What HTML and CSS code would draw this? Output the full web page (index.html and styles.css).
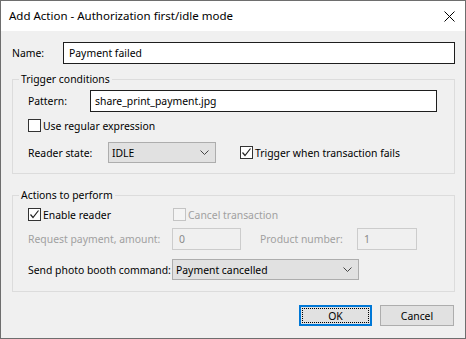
FILE: index.html
```html
<!DOCTYPE html>
<html>
<head>
<meta charset="utf-8">
<link rel="stylesheet" href="styles.css">
</head>
<body>
<div class="window">
  <div class="titlebar">
    <span class="title">Add Action - Authorization first/idle mode</span>
    <svg class="close" width="11" height="11" viewBox="0 0 11 11"><path d="M0.5 0.5L10.5 10.5M10.5 0.5L0.5 10.5" stroke="#000" stroke-width="1" fill="none"/></svg>
  </div>
  <div class="content">
    <div class="row name-row">
      <label class="lbl name-lbl">Name:</label>
      <div class="edit name-edit">Payment failed</div>
    </div>

    <fieldset class="group group1">
      <legend>Trigger conditions</legend>
      <div class="group-body">
        <div class="row pattern-row">
          <label class="lbl pattern-lbl">Pattern:</label>
          <div class="edit pattern-edit">share_print_payment.jpg</div>
        </div>
        <div class="row check-row regex-row">
          <span class="box"></span><span class="ctext">Use regular expression</span>
        </div>
        <div class="row state-row">
          <label class="lbl state-lbl">Reader state:</label>
          <div class="combo state-combo"><span>IDLE</span><svg class="chev" width="9" height="5" viewBox="0 0 9 5"><path d="M0.5 0.5L4.5 4.5L8.5 0.5" stroke="#444" fill="none"/></svg></div>
          <span class="box checked trig-box"><svg width="11" height="11" viewBox="0 0 11 11"><path d="M1.5 5.5L4 8.5L9.5 1.5" stroke="#222" stroke-width="1.2" fill="none"/></svg></span><span class="ctext">Trigger when transaction fails</span>
        </div>
      </div>
    </fieldset>

    <fieldset class="group group2">
      <legend>Actions to perform</legend>
      <div class="group-body">
        <div class="row check-row enable-row">
          <div class="enable-cell"><span class="box checked"><svg width="11" height="11" viewBox="0 0 11 11"><path d="M1.5 5.5L4 8.5L9.5 1.5" stroke="#222" stroke-width="1.2" fill="none"/></svg></span><span class="ctext">Enable reader</span></div>
          <span class="box disabled"></span><span class="ctext dis">Cancel transaction</span>
        </div>
        <div class="row req-row">
          <label class="lbl dis req-lbl">Request payment, amount:</label>
          <div class="edit disabled amount-edit">0</div>
          <label class="lbl dis prod-lbl">Product number:</label>
          <div class="edit disabled prod-edit">1</div>
        </div>
        <div class="row send-row">
          <label class="lbl send-lbl">Send photo booth command:</label>
          <div class="combo send-combo"><span>Payment cancelled</span><svg class="chev" width="9" height="5" viewBox="0 0 9 5"><path d="M0.5 0.5L4.5 4.5L8.5 0.5" stroke="#444" fill="none"/></svg></div>
        </div>
      </div>
    </fieldset>

    <div class="buttons">
      <div class="btn default"><span class="focus">OK</span></div>
      <div class="btn">Cancel</div>
    </div>
  </div>
</div>
</body>
</html>
```

FILE: styles.css
```css
* { box-sizing: border-box; }
html, body { margin: 0; padding: 0; }
body {
  width: 466px;
  height: 339px;
  overflow: hidden;
  font-family: "Noto Sans", "Open Sans", sans-serif;
  font-size: 10.4px;
  color: #000;
  background: #fff;
}
.window {
  width: 466px;
  height: 339px;
  border: 1px solid #6e6e6e;
  background: #f0f0f0;
  display: flex;
  flex-direction: column;
}
.titlebar {
  height: 30px;
  background: #fff;
  display: flex;
  align-items: center;
  justify-content: space-between;
  padding: 0 10px 0 8px;
  flex: none;
}
.title { font-size: 11.5px; line-height: 16px; }
.close { display: block; }

.content {
  flex: 1;
  padding: 0 11px;
  display: flex;
  flex-direction: column;
}
.row { display: flex; align-items: center; }
.lbl { line-height: 16px; white-space: nowrap; }
.dis { color: #a0a0a0; }

.edit {
  height: 22px;
  border: 1px solid #1e1e1e;
  background: #fff;
  line-height: 20px;
  padding: 0 4px;
  white-space: nowrap;
}
.edit.disabled {
  border-color: #cccccc;
  background: #f0f0f0;
  color: #8a8a8a;
  padding-left: 6px;
}

.name-row { margin-top: 11px; height: 22px; margin-right: -2px; }
.name-lbl { width: 51px; }
.name-edit { width: 392px; padding-left: 5px; }

.group {
  margin: 0;
  border: 1px solid #dcdcdc;
  padding: 0;
  min-width: 0;
}
.group legend {
  padding: 0 2px;
  margin-left: 6px;
  line-height: 14px;
}
.group-body { padding-left: 15px; }
.group1 { margin-top: 8px; margin-right: -1px; }
.group1 .group-body { padding-bottom: 10px; }
.group2 { margin-top: 14px; margin-right: -1px; }
.group2 .group-body { padding-bottom: 11px; }

.pattern-row { margin-top: 4px; height: 22px; }
.pattern-lbl { width: 62px; }
.pattern-edit { width: 347px; }

.check-row { height: 13px; }
.regex-row { margin-top: 7px; }

.box {
  width: 13px;
  height: 13px;
  border: 1px solid #333;
  background: #fff;
  flex: none;
  display: inline-flex;
  align-items: center;
  justify-content: center;
}
.box svg { display: block; }
.box.disabled { border-color: #c4c4c4; background: #f4f4f4; }
.ctext { margin-left: 2px; line-height: 16px; white-space: nowrap; }

.state-row { margin-top: 10px; height: 21px; }
.state-lbl { width: 80px; }
.combo {
  height: 21px;
  border: 1px solid #adadad;
  background: #e1e1e1;
  display: flex;
  align-items: center;
  justify-content: space-between;
  padding: 0 6px 0 3px;
  white-space: nowrap;
}
.chev { display: block; }
.state-combo { width: 108px; }
.trig-box { margin-left: 24px; }

.enable-row { margin-top: 6px; }
.enable-cell { width: 145px; display: flex; align-items: center; }

.req-row { margin-top: 7px; height: 22px; }
.req-lbl { width: 144px; }
.amount-edit { width: 69px; }
.prod-lbl { width: 97px; margin-left: 19px; }
.prod-edit { width: 60px; }

.send-row { margin-top: 9px; height: 21px; }
.send-lbl { width: 144px; }
.send-combo { width: 187px; }

.buttons {
  margin-top: 13px;
  display: flex;
  justify-content: flex-end;
  gap: 8px;
}
.btn {
  width: 74px;
  height: 21px;
  border: 1px solid #adadad;
  background: #e1e1e1;
  display: flex;
  align-items: center;
  justify-content: center;
  line-height: 16px;
}
.btn.default {
  border: 2px solid #0078d7;
  padding: 1px;
  width: 73px;
}
.focus {
  width: 100%;
  height: 100%;
  border: 1px dotted #000;
  display: flex;
  align-items: center;
  justify-content: center;
}
```
